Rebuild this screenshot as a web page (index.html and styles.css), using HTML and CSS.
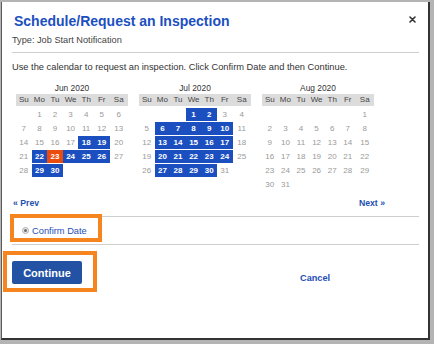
FILE: index.html
```html
<!DOCTYPE html>
<html lang="en">
<head>
<meta charset="UTF-8" />
<title>Schedule/Request an Inspection</title>
<link rel="stylesheet" href="styles.css">
</head>
<body>
  <!-- Dialog -->
  <section class="dialog" aria-label="Schedule inspection">
    <header class="dialog-head">
      <h1 class="title">Schedule/Request an Inspection</h1>
      <button class="close" aria-label="Close">
        <svg width="7" height="7" viewBox="0 0 7 7"><path d="M1 1L6 6M6 1L1 6" stroke="#333" stroke-width="1.6" stroke-linecap="round"/></svg>
      </button>
      <p class="type">Type: Job Start Notification</p>
    </header>

    <p class="intro">Use the calendar to request an inspection. Click Confirm Date and then Continue.</p>

    <div class="months" id="months"></div>

    <div class="nav">
      <a href="#">&laquo; Prev</a>
      <a href="#">Next &raquo;</a>
    </div>

    <div class="confirm">
      <span class="radio"></span>
      <a href="#">Confirm Date</a>
      <span class="mark confirm-mark"></span>
    </div>

    <footer class="foot">
      <button class="btn">Continue<span class="mark btn-mark"></span></button>
      <a href="#" class="cancel">Cancel</a>
    </footer>
  </section>

<script>
  // Months shown in the picker
  const months = [
    { name: 'Jun 2020', offset: 1, days: 30, open: [18, 19, 22, 24, 25, 26, 29, 30], picked: 23 },
    { name: 'Jul 2020', offset: 3, days: 31, open: [1, 2, 6, 7, 8, 9, 10, 13, 14, 15, 16, 17, 20, 21, 22, 23, 24, 27, 28, 29, 30], picked: 0 },
    { name: 'Aug 2020', offset: 6, days: 31, open: [], picked: 0 }
  ];
  const weekdays = ['Su', 'Mo', 'Tu', 'We', 'Th', 'Fr', 'Sa'];
  const wrap = document.getElementById('months');

  months.forEach(m => {
    const cal = document.createElement('div');
    cal.className = 'month';
    let html = `<div class="month-title">${m.name}</div><div class="dow">`;
    html += weekdays.map(d => `<span>${d}</span>`).join('') + '</div><div class="days">';
    for (let i = 0; i < m.offset; i++) html += '<div class="day"></div>';
    for (let d = 1; d <= m.days; d++) {
      let cls = 'day';
      if (d === m.picked) cls += ' picked';
      else if (m.open.includes(d)) cls += ' open';
      html += `<div class="${cls}"><span>${d}</span></div>`;
    }
    html += '</div>';
    cal.innerHTML = html;
    wrap.appendChild(cal);
  });
</script>
</body>
</html>
```

FILE: styles.css
```css
/* Base */
* {
  box-sizing: border-box;
}
html, body {
  margin: 0;
  height: 100%;
  overflow: hidden;
}
body {
  padding: 2px 0 0 1px;
  background: #b4b4b4;
  font-family: 'Liberation Sans', Arial, sans-serif;
  color: #333;
}
a {
  text-decoration: none;
}

.dialog {
  width: 429px;
  height: 338px;
  background: #fff;
  border-left: 1px solid #5c5c5c;
  border-right: 2px solid #333;
  border-bottom: 2px solid #333;
  padding: 0 9px 0 10px;
}

/* Header */
.dialog-head {
  position: relative;
  padding-top: 11px;
  padding-bottom: 6px;
  border-bottom: 1px solid #cfcfcf;
}
.title {
  margin: 0;
  padding-left: 2px;
  font-size: 14px;
  line-height: 16px;
  font-weight: 700;
  color: #1c4fc0;
}
.close {
  position: absolute;
  right: 3px;
  top: 14px;
  padding: 0;
  border: none;
  background: none;
  line-height: 0;
}
.type {
  margin: 6px 0 0;
  font-size: 9.2px;
  line-height: 11px;
  color: #444;
}

.intro {
  margin: 9px 0 0;
  font-size: 9.3px;
  line-height: 11px;
  color: #333;
}

/* Calendars */
.months {
  display: flex;
  align-items: flex-start;
  gap: 11px;
  margin-top: 10px;
  padding-left: 4px;
  height: 108px;
}
.month {
  width: 112px;
}
.month-title {
  font-size: 8.4px;
  line-height: 10px;
  text-align: center;
  color: #333;
  margin-bottom: 1px;
}
.dow, .days {
  display: grid;
  grid-template-columns: repeat(6, 15.6px) 18.4px;
}
.dow {
  height: 12px;
  background: #dcdcdc;
  font-size: 8px;
  line-height: 12px;
  text-align: center;
  color: #444;
}
.days {
  grid-auto-rows: 14px;
  margin-top: 1px;
  font-size: 8px;
  color: #9a9a9a;
}
.day {
  padding-top: 1px;
}
.day span {
  display: block;
  height: 13px;
  line-height: 14px;
  text-align: center;
}
.day.open span {
  background: #1b4fc0;
  color: #fff;
  font-weight: 700;
}
.day.picked span {
  background: #ea4b0e;
  color: #fff;
  font-weight: 700;
}

/* Prev / Next */
.nav {
  display: flex;
  justify-content: space-between;
  margin-top: 7px;
  padding: 0 34px 8px 1px;
  border-bottom: 1px solid #cfcfcf;
  font-size: 8.7px;
  line-height: 10px;
  font-weight: 700;
}
.nav a {
  color: #1e4fae;
}

/* Confirm row */
.confirm {
  position: relative;
  display: flex;
  align-items: center;
  gap: 3px;
  height: 28px;
  padding-left: 10px;
  border-bottom: 1px solid #cfcfcf;
  font-size: 9.3px;
}
.confirm a {
  color: #1f4fb6;
}
.radio {
  position: relative;
  width: 7px;
  height: 7px;
  border-radius: 50%;
  border: 1px solid #b3b3b3;
  background: #e8e8e8;
}
.radio::after {
  content: '';
  position: absolute;
  left: 1px;
  top: 1px;
  width: 3px;
  height: 3px;
  border-radius: 50%;
  background: #6b6b6b;
}

/* Orange annotation boxes */
.mark {
  position: absolute;
  border: 4px solid #f6851f;
  pointer-events: none;
}
.confirm-mark {
  left: -2px;
  top: -3px;
  width: 92px;
  height: 28px;
}

/* Footer */
.foot {
  display: flex;
  align-items: flex-end;
  padding-top: 16px;
}
.btn {
  position: relative;
  width: 70px;
  height: 23px;
  padding: 0;
  border: none;
  border-radius: 2px;
  background: #2352a5;
  color: #fff;
  font-family: inherit;
  font-size: 11px;
  font-weight: 700;
}
.btn-mark {
  left: -9px;
  top: -10px;
  width: 94px;
  height: 41px;
}
.cancel {
  margin-left: 218px;
  font-size: 9.2px;
  line-height: 11px;
  font-weight: 700;
  color: #1f4fb6;
}
```
